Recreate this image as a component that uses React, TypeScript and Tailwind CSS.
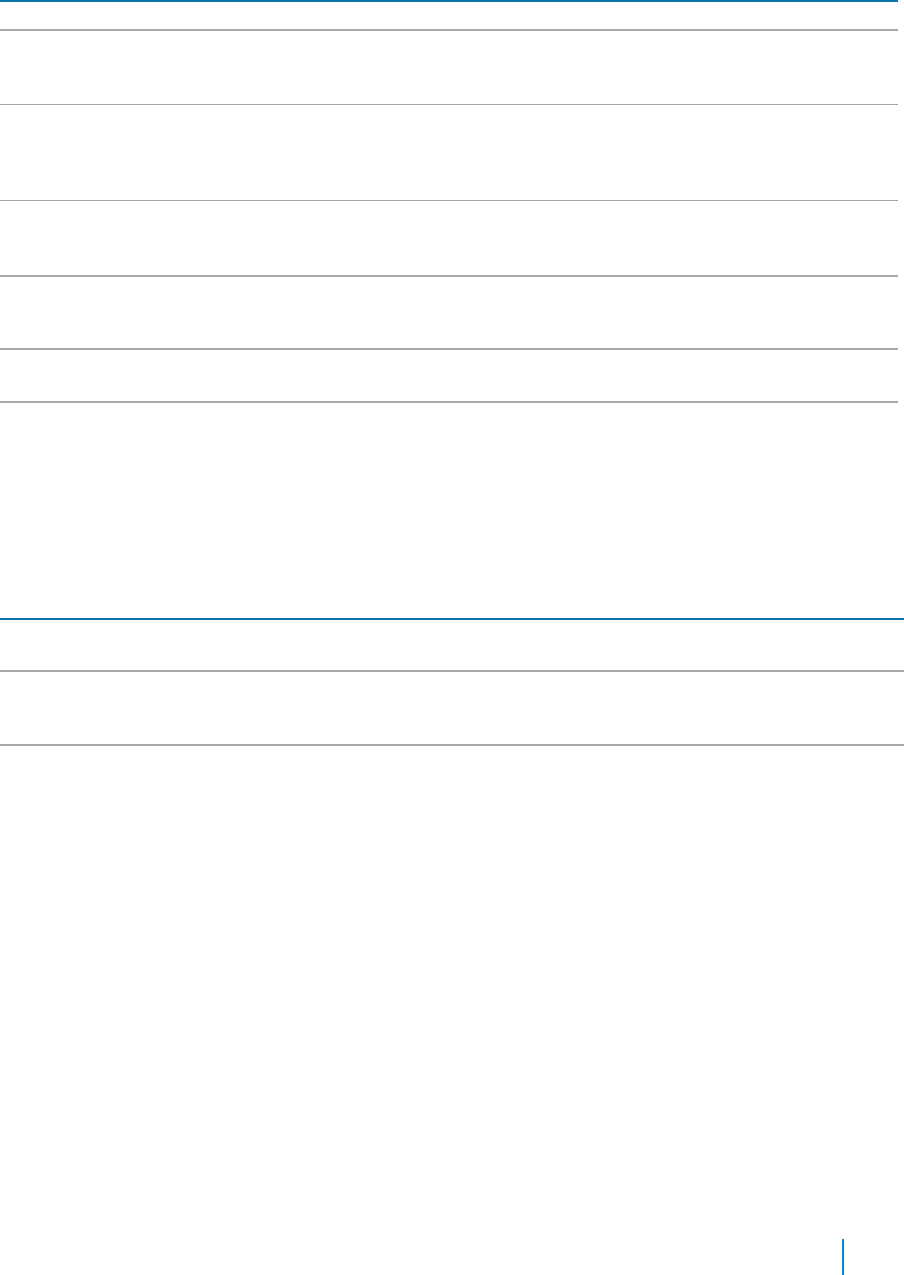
export default function App() {
  return (
    <div className="flex min-h-[1275px] flex-col bg-white font-['Liberation_Sans',sans-serif]">
      {/* first table: empty rows */}
      <div className="w-[898px] border-t-2 border-[#0a74ae]">
        <div className="h-[29px] border-b-2 border-[#a8a8a8]" />
        <div className="h-[74px] border-b border-[#a8a8a8]" />
        <div className="h-[96px] border-b border-[#a8a8a8]" />
        <div className="h-[76px] border-b-2 border-[#a8a8a8]" />
        <div className="h-[73px] border-b-2 border-[#a8a8a8]" />
        <div className="h-[53px] border-b-2 border-[#a8a8a8]" />
      </div>

      {/* second table */}
      <div className="mt-[215px] w-full border-t-2 border-[#0a74ae]">
        <div className="h-[52px] border-b-2 border-[#a8a8a8]" />
        <div className="h-[74px] border-b-2 border-[#a8a8a8]" />
      </div>

      {/* page footer marker */}
      <div className="mt-auto flex justify-end pr-[60px]">
        <div className="h-[36px] w-[2px] bg-[#0a86c8]" />
      </div>
    </div>
  );
}
